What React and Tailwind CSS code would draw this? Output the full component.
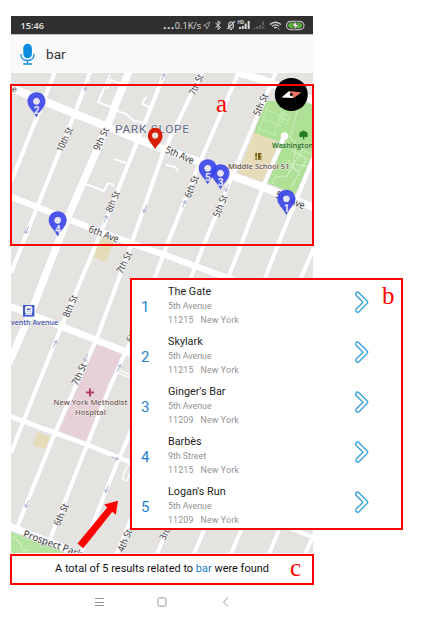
import React from "react";

const places = [
  { name: "The Gate", street: "5th Avenue", zip: "11215" },
  { name: "Skylark", street: "5th Avenue", zip: "11215" },
  { name: "Ginger's Bar", street: "5th Avenue", zip: "11209" },
  { name: "Barbès", street: "9th Street", zip: "11215" },
  { name: "Logan's Run", street: "5th Avenue", zip: "11209" },
];

const streets = [
  "M55 72 L11 182",
  "M90 72 L75 113 L38 205 L11 273",
  "M165 72 L138 140 L97 242 L63 323 L35 392 L11 453",
  "M202 72 L163 153 L130 248 L97 338 L73 392 L55 433 L16 530",
  "M238 74 L200 162 L167 245 L154 280 L130 342 L110 387 L87 445 L49 542",
  "M276 72 L233 174 L203 247 L190 280 L128 438 L117 463 L81 554",
  "M284 137 L263 187 L241 245 L226 283",
  "M316 152 L281 237 L264 281",
  "M314 248 L300 280",
  "M131 519 L116 555",
  "M167 530 L157 554",
  "M204 530 L194 554",
  "M241 530 L231 554",
  "M279 530 L269 554",
  "M316 530 L305 554",
  "M290 528 L315 538",
];

const avenues = [
  { d: "M9 87 L73 113 L160 148 L200 162 L230 175 L263 187 L315 208", w: 8 },
  { d: "M9 196 L70 220 L133 244 L165 255 L236 281", w: 6.5 },
  { d: "M9 306 L63 327 L132 354", w: 7 },
  { d: "M9 416 L88 445 L132 463", w: 5 },
  { d: "M9 526 L50 542 L80 555", w: 7 },
  { d: "M236 72 L263 80 L315 101", w: 8 },
  { d: "M129 71 L107 127 L68 217 L32 310 L9 363", w: 7.5 },
];

const paths = [
  "M110 75 L98 102 L111 107 L121 84 L111 80 L107 89",
  "M114 110 L126 114 L134 121 L142 122",
  "M146 97 L142 104 L149 107",
  "M114 159 L126 163",
  "M86 184 L104 191 L108 183 L114 185",
  "M166 165 L175 167 L178 171",
];

const labels = [
  { t: "10th St", x: 64.5, y: 139.5, r: -65, w: 26 },
  { t: "9th St", x: 101, y: 139, r: -65, w: 24 },
  { t: "8th St", x: 112.5, y: 201.5, r: -67, w: 22 },
  { t: "7th St", x: 196, y: 84.5, r: -66, w: 21.5 },
  { t: "5th St", x: 260.5, y: 104.5, r: -66, w: 23 },
  { t: "6th St", x: 191.5, y: 186.5, r: -67, w: 23 },
  { t: "5th St", x: 220, y: 206, r: -67, w: 23 },
  { t: "8th St", x: 70, y: 306, r: -67, w: 23 },
  { t: "7th St", x: 124, y: 262.5, r: -63, w: 23 },
  { t: "7th St", x: 79, y: 374, r: -65, w: 23 },
  { t: "6th St", x: 61, y: 514.5, r: -66, w: 23 },
  { t: "4th St", x: 124.5, y: 540.5, r: -67, w: 23 },
  { t: "3rd St", x: 167, y: 529, r: -64, w: 23 },
  { t: "6th St", x: 133.5, y: 331, r: -65, w: 23 },
];

const aves = [
  { t: "5th Ave", x: 180, y: 154.5, r: 23, w: 30 },
  { t: "6th Ave", x: 104, y: 233.5, r: 21, w: 31 },
  { t: "5th Ave", x: 290.5, y: 199.5, r: 23, w: 31 },
];

const oneWays = [
  [86, 87, 114], [27, 230, 114], [105.5, 219, -66], [145, 209, 114],
  [163, 77, -66], [184, 204, -66], [227, 188, 114], [55, 344, -66],
  [86, 358, 114], [119, 368, -66], [115, 458, 21], [107, 489, 114], [27, 504, 114],
];

const pins = [
  { x: 36.5, y: 117.5, n: "2" },
  { x: 57.7, y: 236.5, n: "4" },
  { x: 207.7, y: 184.5, n: "5" },
  { x: 220.5, y: 189.5, n: "3" },
  { x: 286.3, y: 215, n: "1" },
];

const PIN = "M0 0 C-2.8 -6.5 -9 -10.2 -9 -16.2 C-9 -21.4 -5 -25.2 0 -25.2 C5 -25.2 9 -21.4 9 -16.2 C9 -10.2 2.8 -6.5 0 0 Z M0 -19.4 a3.2 3.2 0 1 0 0.01 0 Z";

function Label({ t, x, y, r, w, size = 9.6, fill = "#333336", halo = "#f4f4f3" }) {
  return (
    <text
      transform={`translate(${x} ${y}) rotate(${r})`}
      textAnchor="middle"
      dominantBaseline="central"
      fontSize={size}
      fill={fill}
      stroke={halo}
      strokeWidth="1.6"
      paintOrder="stroke"
      strokeLinejoin="round"
      textLength={w}
      lengthAdjust="spacingAndGlyphs"
    >
      {t}
    </text>
  );
}

function StreetMap() {
  return (
    <svg viewBox="11 73 302 480" className="block h-[480px] w-[302px] font-['Open_Sans',sans-serif]">
      <rect x="11" y="73" width="302" height="480" fill="#e4e3df" />
      <path d="M265 101 L314 101 V154 L295 194 L265 182 L276 155 L277 141 L254 133 Z" fill="#aee095" />
      <path d="M254 133 L276 141 L277 154 L262 183 L238 173 Z" fill="#e6dcb7" />
      <path d="M97 236 L114 240 L106 262 L93 257 Z M37 432 L50 437 L45 449 L33 445 Z" fill="#e5dcb7" />
      <path d="M95 343 L122 353 L86 442 L59 432 Z" fill="#e8d0d9" />
      <path d="M11 532 L48 545 L70 554 H11 Z" fill="#b5e4a0" />
      <g fill="none" stroke="#c3f0b5" strokeWidth="1">
        <path d="M268 105 L258 134 M282 108 L274 136 M263 119 L281 126 M267 110 L279 115 M258 128 L276 136 M282 113 l8 3 l-3 8 l-8 -3 Z M281 118 l8 3 M285 111 l-3 10" />
      </g>
      <g fill="none" stroke="#d7efcb" strokeWidth="1.3" strokeDasharray="2.5 1">
        <path d="M299 102 L294 124 L290 137 L300 148 L313 155 M291 150 L307 159 L299 171 L286 165 M288 160 L299 174 L291 187 M305 145 L287 176 L275 177 L272 184 M296 146 L293 164 L310 167" />
        <path d="M13 537 L20 543 L23 550 L30 551" />
      </g>
      <g fill="none" stroke="#dcdce7" strokeLinejoin="round">
        {streets.map((d) => <path key={d} d={d} strokeWidth="5.2" />)}
        {avenues.map((a) => <path key={a.d} d={a.d} strokeWidth={a.w + 1.1} />)}
        {paths.map((d) => <path key={d} d={d} strokeWidth="2.6" />)}
      </g>
      <g fill="none" stroke="#fff" strokeLinejoin="round">
        {paths.map((d) => <path key={d} d={d} strokeWidth="2" />)}
        {streets.map((d) => <path key={d} d={d} strokeWidth="4.2" />)}
        {avenues.map((a) => <path key={a.d} d={a.d} strokeWidth={a.w} />)}
        <path d="M119 370 L131 375 M118 373 L131 378 M131 464 L127 466 L122 479 L127 481 L131 470" strokeWidth="1.3" />
      </g>
      <circle cx="284.5" cy="136" r="3.8" fill="#fff" />
      <g fill="none" stroke="#9ca7c9" strokeWidth="0.8">
        {oneWays.map(([x, y, r]) => (
          <path key={`${x}-${y}`} transform={`translate(${x} ${y}) rotate(${r})`} d="M-4 0 H3.5 M1 -2 L3.7 0 L1 2" />
        ))}
      </g>

      <text x="115" y="133" fontSize="11.8" fill="#626b88" stroke="#eeeeed" strokeWidth="1.5" paintOrder="stroke" textLength="74" lengthAdjust="spacing" fontFamily="Roboto">PARK SLOPE</text>
      {labels.map((l) => <Label key={`${l.x}`} {...l} />)}
      {aves.map((l) => <Label key={`${l.x}`} {...l} size={10} />)}
      <text transform="translate(22.5 536.5) rotate(20)" fontSize="10" fill="#333336" stroke="#f4f4f3" strokeWidth="1.6" paintOrder="stroke" textLength="62" lengthAdjust="spacingAndGlyphs">Prospect Park</text>
      <text transform="translate(11.3 91) rotate(22)" fontSize="8.5" fill="#3b3b3e">e</text>

      <g fontWeight="600" fontSize="7.6" stroke="#f3f1ee" strokeWidth="1" paintOrder="stroke">
        <text x="228" y="169" fill="#6b5850" textLength="61.5" lengthAdjust="spacingAndGlyphs">Middle School 51</text>
        <text x="272" y="148" fill="#2e6b2d" stroke="#bce6a9" textLength="41" lengthAdjust="spacingAndGlyphs">Washington</text>
        <text x="11" y="325" fill="#4658ae" textLength="47" lengthAdjust="spacingAndGlyphs">venth Avenue</text>
        <text x="53.5" y="405" fill="#775e5b" textLength="74" lengthAdjust="spacingAndGlyphs">New York Methodist</text>
        <text x="75" y="414.5" fill="#775e5b" textLength="31" lengthAdjust="spacingAndGlyphs">Hospital</text>
      </g>

      {/* School, park, station and hospital symbols */}
      <path d="M255.3 153 h1.6 v4.2 h-1.6 Z M255.3 158 h1.6 v1.8 h-1.6 Z M258 153 h3.5 v1.6 h-1.8 v1.2 h1.8 v1.6 h-1.8 v1 h1.8 v1.4 h-3.5 Z" fill="#705500" />
      <path d="M303 139.5 V136.8 C300 138 298.5 136.3 299.6 134.7 C298.8 132.5 300.5 131.7 301.3 131.8 C302 130.3 305 130.3 305.7 131.8 C307.4 131.8 308.2 133.4 307.4 134.7 C308.5 136.4 307 138 304.3 136.8 V139.5 Z" fill="#267b25" />
      <rect x="23" y="305" width="11.4" height="11.6" fill="#3d57cc" />
      <path d="M26.7 306.5 h4 q1.2 0 1.2 1.2 v4.3 q0 1.2 -1.2 1.2 h-4 q-1.2 0 -1.2 -1.2 v-4.3 q0 -1.2 1.2 -1.2 Z M26.7 313 L25.5 315.3 M30.7 313 L32 315.3 M26.2 314.4 h5" fill="#fff" stroke="#fff" strokeWidth="0.9" />
      <path d="M26.8 308.4 h3.8 v1.7 h-3.8 Z M27 311.2 h1 v1 h-1 Z M29.5 311.2 h1 v1 h-1 Z" fill="#3d57cc" />
      <path d="M90 388.5 V396.5 M86 392.5 H94" stroke="#b33f70" strokeWidth="2" />

      <path d="M155.2 149.3 C153 144.5 148 142 148 136 C148 131 151 127.8 155.2 127.8 C159.4 127.8 162.5 131 162.5 136 C162.5 142 157.3 144.5 155.2 149.3 Z M155.2 132.3 a3.1 3.1 0 1 0 0.01 0 Z" fill="#d81e06" fillRule="evenodd" />
      <circle cx="155.2" cy="135.4" r="2.9" fill="#ebe2df" />
      {pins.map((p) => (
        <g key={p.n} transform={`translate(${p.x} ${p.y})`}>
          <path d={PIN} fill="#343fe8" fillOpacity="0.88" fillRule="evenodd" />
          <circle cx="0" cy="-16.2" r="3.1" fill="#e7e6f0" />
          <text x="0.2" y="-3.3" textAnchor="middle" fontFamily="Roboto" fontWeight="700" fontSize="10" fill="#e9eaff">{p.n}</text>
        </g>
      ))}

      <circle cx="291.3" cy="94.5" r="16.5" fill="#000" />
      <path d="M281.5 97.5 L289 91 L293.5 98 Z" fill="#fff" />
      <path d="M289 91 L301.5 92.5 L293.5 98 Z" fill="#ef7965" />
      <circle cx="291.3" cy="94.6" r="1.5" fill="#111" />
      <path d="M77.5 543.5 L107.3 507.5 L104.2 504.5 L118 500.8 L115.8 514.8 L112.3 511.7 L83.3 548.3 Z" fill="#f00" />
    </svg>
  );
}

function StatusIcons() {
  return (
    <svg viewBox="0 0 104 18" className="h-[18px] w-[104px]" fill="none" stroke="#d7d7d7" strokeWidth="1">
      <path d="M1.5 9.5 L8 6 L5 13 L4.2 10.3 Z" stroke="#999" />
      <path d="M13.5 7 L18.5 11.5 L16 13.5 V5 L18.5 7 L13.5 11.5" />
      <path d="M26 12 H31.5 M26.8 11.5 V8.5 Q27 6 29 6 Q31 6 31.3 8.5 V11.5 M28 13.5 H30 M25.3 13.2 L32.8 5.2" strokeWidth="1.2" />
      <text x="35.6" y="7.8" stroke="none" fill="#ddd" fontSize="4.8" fontWeight="700" fontFamily="Roboto">HD</text>
      <path d="M38 13 V11 M40.8 13 V10 M43.6 13 V7.5 M46.7 13 V5" strokeWidth="2" />
      <path d="M52.5 13 V11.7 M55.2 13 V10.6 M58 13 V9 M61 9 V5.5" stroke="#696969" strokeWidth="1.7" />
      <path d="M59.8 10 L62.5 13 M62.5 10 L59.8 13" stroke="#696969" />
      <path d="M68 8.5 Q73.5 3.8 79 8.5 M70 10.3 Q73.5 7.4 77 10.3 M72 12 Q73.5 10.8 75 12" strokeWidth="1.4" />
      <path d="M76 12 L77.5 13.5" strokeWidth="0.8" />
      <rect x="84.5" y="5.5" width="17.5" height="8" rx="4" stroke="#b5b5b5" strokeWidth="1.3" />
      <rect x="86.2" y="7" width="14" height="5" rx="2.4" fill="#55b72f" stroke="none" />
      <path d="M94.5 5 L90 10 H93 L92 14 L97 8.6 H94 Z" fill="#fff" stroke="#303030" strokeWidth="0.5" />
    </svg>
  );
}

function Chevron() {
  return (
    <svg viewBox="0 0 16 24" className="h-6 w-4 shrink-0" fill="none" stroke="#35a0db" strokeWidth="1.35" strokeLinejoin="round">
      <path d="M2.2 5.6 Q1.2 4.4 1.9 3 Q2.8 1.6 4.4 2.3 L13.4 11.3 Q14.2 12.2 13.4 13.1 L5 21.8 Q3.6 22.8 2.2 21.6 Q1.3 20.2 2.3 18.8 L9 12.2 Z" />
    </svg>
  );
}

export default function App() {
  return (
    <div className="relative h-[626px] w-[421px] overflow-hidden bg-white pl-[11px] pt-4 font-[Roboto,sans-serif]">
      <main className="flex w-[302px] flex-col">
        <header className="flex h-[18px] items-center justify-between bg-[#303030] pl-[9px] pr-[7px] text-[#e2e2e2]">
          <svg viewBox="0 0 26 18" className="h-[18px] w-[26px]">
            <text x="0.5" y="13" textLength="23.5" lengthAdjust="spacingAndGlyphs" className="fill-[#e6e6e6] font-['Open_Sans'] text-[9px] font-semibold">15:46</text>
          </svg>
          <div className="flex items-center">
            <svg viewBox="0 0 39 18" className="h-[18px] w-[39px]">
              <path d="M0.8 11.3 h2 v1.8 h-2 Z M4.7 11.3 h2 v1.8 h-2 Z M8.6 11.3 h2 v1.8 h-2 Z" fill="#ddd" />
              <text x="11.7" y="13" textLength="26.5" lengthAdjust="spacingAndGlyphs" className="fill-[#dedede] font-['Open_Sans'] text-[9px] font-medium">0.1K/s</text>
            </svg>
            <StatusIcons />
          </div>
        </header>

        <div className="flex h-[39px] items-center border-t border-[#bdbdbd] bg-[#fafafa] pl-[9px]">
          <svg viewBox="0 0 15 22" className="h-[22px] w-[15px]" fill="none" stroke="#0c8de2" strokeWidth="1.3">
            <rect x="3.3" y="0.8" width="8.6" height="14.5" rx="4.3" fill="#0c8de2" stroke="none" />
            <path d="M0.9 11 C1 15 3.5 17.5 7.5 17.5 S14 15 14.1 11 M7.5 17.5 V20.8 M3.3 21 H11.8" />
          </svg>
          <span className="ml-[11px] text-[13.6px] leading-5 text-[#333]">bar</span>
        </div>

        <StreetMap />

        <footer className="-mx-px mt-px flex h-[30.5px] items-center border-2 border-[#f00] text-[#111]">
          <p className="w-[302px] whitespace-nowrap pl-[43px] text-[10.97px] leading-none">
            A total of 5 results related to <span className="text-[#1b7cc9]">bar</span> were found
          </p>
        </footer>

        <nav className="flex h-[34px] items-center">
          <svg viewBox="0 0 302 34" className="h-[34px] w-[302px]" fill="none" stroke="#929292" strokeWidth="1">
            <path d="M84 13.5 H93 M84 17.5 H93 M84 20.5 H93" />
            <rect x="147" y="12.9" width="8" height="8.3" rx="1.5" />
            <path d="M217 12.6 L212.5 17 L217 21.4" />
          </svg>
        </nav>
      </main>

      <div className="absolute left-[10px] top-[84px] h-[162px] w-[304px] border-2 border-[#f00]" />
      <span className="absolute left-[216px] top-[90px] font-['Liberation_Serif',serif] text-[25px] leading-7 text-[#f00]">a</span>
      <span className="absolute left-[290px] top-[554px] font-['Liberation_Serif',serif] text-[25px] leading-7 text-[#f00]">c</span>

      <section className="absolute left-[130px] top-[278px] h-[252px] w-[273px] overflow-hidden border-2 border-[#f00] bg-white">
        {places.map((place, i) => (
          <article key={place.name} className="flex h-[50px] pl-[9px]">
            <span className="w-[27px] pt-[18px] text-[15px] leading-[18px] text-[#2782cc]">{i + 1}</span>
            <div className="w-[186px] pt-[4px]">
              <h2 className="text-[10.8px] leading-[15px] text-[#252525]">{place.name}</h2>
              <p className="text-[8.8px] leading-[14px] text-[#929292]">{place.street}</p>
              <p className="flex gap-[7px] text-[8.8px] leading-[14px] tracking-[0.15px] text-[#929292]">
                <span>{place.zip}</span><span>New York</span>
              </p>
            </div>
            <div className="pt-[10px]"><Chevron /></div>
          </article>
        ))}
      </section>
      <span className="absolute left-[382px] top-[282px] font-['Liberation_Serif',serif] text-[25px] leading-7 text-[#f00]">b</span>
    </div>
  );
}
